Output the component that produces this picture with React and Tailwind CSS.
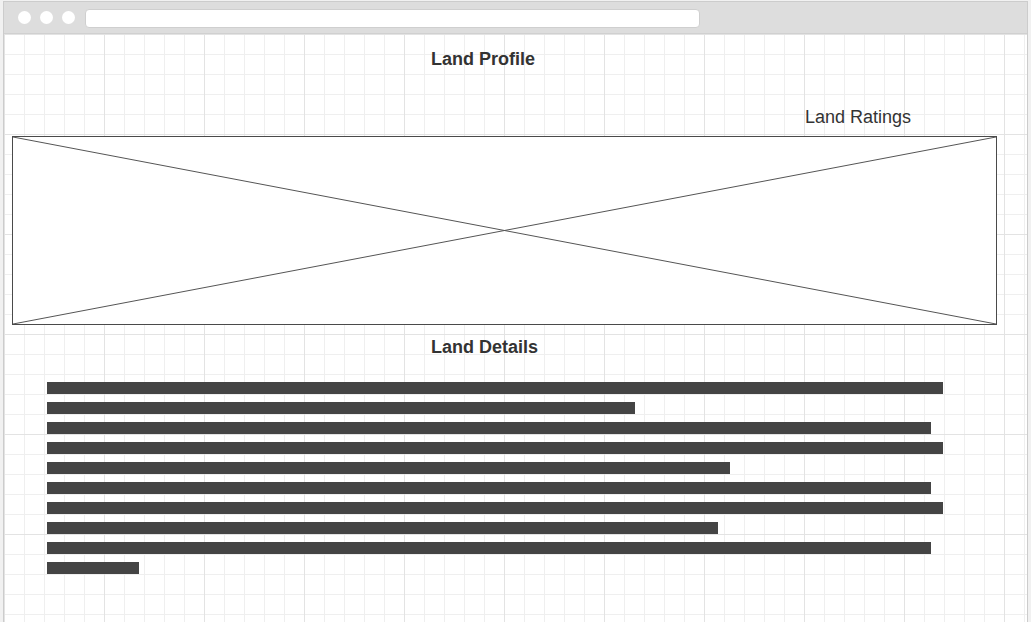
const bars = [896, 588, 884, 896, 683, 884, 896, 671, 884, 92];

const Chrome = () => (
    <div className="h-[32px] bg-[#dddddd] border-b border-[#d0d0d0] flex items-center shrink-0">
        <div className="flex items-center gap-[9px] pl-[14px]">
            <span className="w-[13px] h-[13px] rounded-full bg-white" />
            <span className="w-[13px] h-[13px] rounded-full bg-white" />
            <span className="w-[13px] h-[13px] rounded-full bg-white" />
        </div>
        <div className="ml-[10px] mt-[1px] w-[615px] h-[19px] bg-white rounded-[4px] border border-[#cfcfcf]" />
    </div>
);

const ImagePlaceholder = () => (
    <div className="ml-[8px] w-[985px] h-[189px] bg-white border border-[#4a4a4a] relative">
        <svg className="absolute inset-0 w-full h-full" viewBox="0 0 100 100" preserveAspectRatio="none">
            <line x1="0" y1="0" x2="100" y2="100" stroke="#555555" strokeWidth="1" vectorEffect="non-scaling-stroke" />
            <line x1="100" y1="0" x2="0" y2="100" stroke="#555555" strokeWidth="1" vectorEffect="non-scaling-stroke" />
        </svg>
    </div>
);

export default function App() {
    return (
        <div className="w-[1031px] h-[622px] bg-[#f1f1f1] pt-[1px] px-[3px] overflow-hidden font-['Liberation_Sans',Arial,sans-serif] text-[#333333]">
            <div className="h-full flex flex-col border border-[#cccccc] border-b-0 bg-white">
                <Chrome />
                <div className="flex-1 flex flex-col bg-white bg-[linear-gradient(to_right,#e3e3e3_1px,transparent_1px),linear-gradient(to_bottom,#e3e3e3_1px,transparent_1px),linear-gradient(to_right,#efefef_1px,transparent_1px),linear-gradient(to_bottom,#efefef_1px,transparent_1px)] [background-size:100px_100px,100px_100px,20px_20px,20px_20px]">
                    <h1 className="mt-[14px] ml-[427px] text-[18px] leading-[22px] font-bold">Land Profile</h1>
                    <div className="mt-[36px] ml-[801px] text-[18px] leading-[22px]">Land Ratings</div>
                    <div className="mt-[8px]">
                        <ImagePlaceholder />
                    </div>
                    <h2 className="mt-[11px] ml-[427px] text-[18px] leading-[22px] font-bold">Land Details</h2>
                    <div className="mt-[24px] ml-[43px] flex flex-col gap-[8px]">
                        {bars.map((w, i) => (
                            <div key={i} className="h-[12px] bg-[#444444]" style={{ width: w }} />
                        ))}
                    </div>
                </div>
            </div>
        </div>
    );
}
